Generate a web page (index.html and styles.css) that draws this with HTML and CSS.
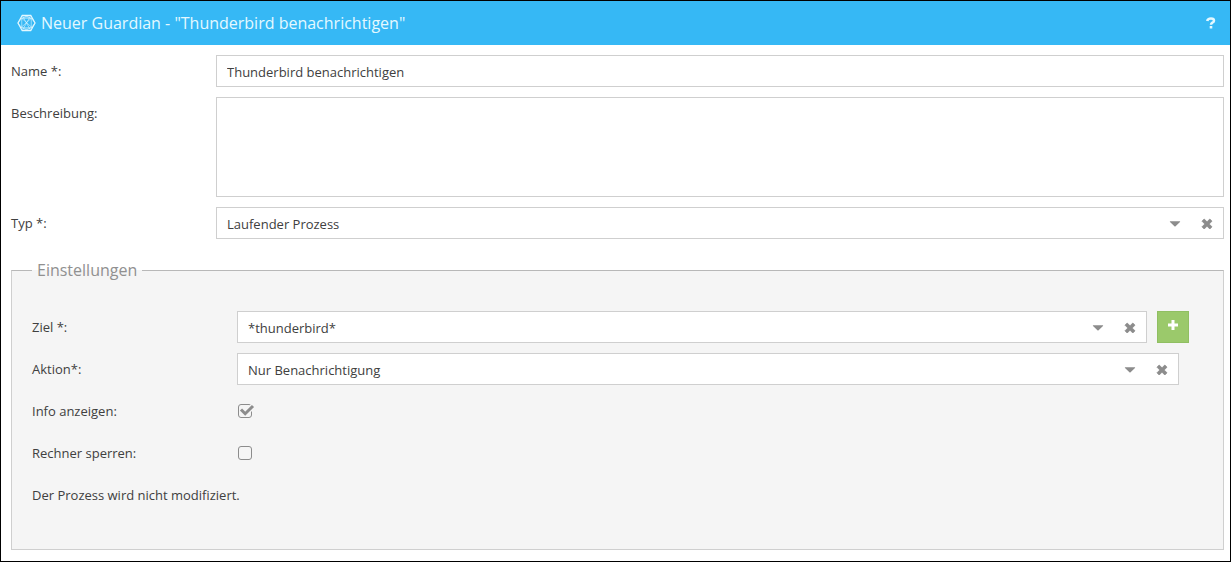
FILE: index.html
```html
<!DOCTYPE html>
<html lang="de">
<head>
<meta charset="utf-8">
<title>Neuer Guardian</title>
<link rel="stylesheet" href="styles.css">
</head>
<body>
<svg class="sprite" aria-hidden="true">
  <symbol id="caret" viewBox="0 0 12 12"><path d="M1.200 3.200h9.600q.7.200.2.900L6.600 8.200q-.6.500-1.200 0L1 4.100q-.5-.7.200-.9z" fill="currentColor"/></symbol>
  <symbol id="cross" viewBox="0 0 12 12"><path d="M3.200 1L6 3.800 8.800 1 11 3.200 8.200 6 11 8.800 8.800 11 6 8.200 3.200 11 1 8.800 3.800 6 1 3.200z" fill="currentColor" stroke="currentColor" stroke-width=".8" stroke-linejoin="round"/></symbol>
</svg>
<main class="window">
  <header class="titlebar">
    <svg class="logo" viewBox="0 0 20 18" aria-hidden="true">
      <path d="M5.500 1h9L19 9l-4.500 8h-9L1 9z" stroke-width="1.200"/>
      <path d="M5.500 1L14.500 17M14.500 1L5.500 17M5 4L16 14M15 4L4 14M5 4h10v10H5zM5.500 1L15 4M14.500 1L5 4M5 14l9.500 3M15 14L5.500 17M1 9l4-5M1 9l4 5M19 9l-4-5M19 9l-4 5" stroke-width=".6"/>
    </svg>
    <h1 class="title">Neuer Guardian - "Thunderbird benachrichtigen"</h1>
    <button class="help" type="button" aria-label="Hilfe">
      <svg viewBox="0 0 10 12" aria-hidden="true"><path d="M1.200 4Q1.700 1.500 5 1.500q3 0 3 2.200 0 1.200-1.600 2Q5 6.500 5 7.800" fill="none" stroke="currentColor" stroke-width="2.500"/><path d="M3.700 9h2.600v2.500H3.700z" fill="currentColor"/></svg>
    </button>
  </header>
  <form class="form">
    <div class="row">
      <label class="label" for="name">Name *:</label>
      <input class="text" id="name" type="text" value="Thunderbird benachrichtigen">
    </div>
    <div class="row">
      <label class="label" for="desc">Beschreibung:</label>
      <textarea class="text area" id="desc"></textarea>
    </div>
    <div class="row">
      <label class="label" for="type">Typ *:</label>
      <div class="combo">
        <select class="select" id="type"><option>Laufender Prozess</option></select>
        <button class="tool" type="button" aria-label="Liste öffnen"><svg><use href="#caret"/></svg></button>
        <button class="tool" type="button" aria-label="Leeren"><svg><use href="#cross"/></svg></button>
      </div>
    </div>
    <fieldset class="group">
      <legend class="legend">Einstellungen</legend>
      <div class="fields">
        <div class="row">
          <label class="label" for="target">Ziel *:</label>
          <div class="combo">
            <select class="select" id="target"><option>*thunderbird*</option></select>
            <button class="tool" type="button" aria-label="Liste öffnen"><svg><use href="#caret"/></svg></button>
            <button class="tool" type="button" aria-label="Leeren"><svg><use href="#cross"/></svg></button>
          </div>
          <button class="add" type="button" aria-label="Hinzufügen"><svg viewBox="0 0 12 12" aria-hidden="true"><path d="M6 1v10M1 6h10" fill="none" stroke="currentColor" stroke-width="3"/></svg></button>
        </div>
        <div class="row inset">
          <label class="label" for="action">Aktion*:</label>
          <div class="combo">
            <select class="select" id="action"><option>Nur Benachrichtigung</option></select>
            <button class="tool" type="button" aria-label="Liste öffnen"><svg><use href="#caret"/></svg></button>
            <button class="tool" type="button" aria-label="Leeren"><svg><use href="#cross"/></svg></button>
          </div>
        </div>
        <div class="row">
          <label class="label" for="info">Info anzeigen:</label>
          <span class="check"><input class="box" id="info" type="checkbox" checked><svg class="tick" viewBox="0 0 18 16" aria-hidden="true"><path d="M8 11l8.500-8.500" fill="none" stroke="#f5f5f5" stroke-width="5.500"/><path d="M4 6.500l4.200 4.200L16 3" fill="none" stroke="currentColor" stroke-width="3"/></svg></span>
        </div>
        <div class="row">
          <label class="label" for="lock">Rechner sperren:</label>
          <span class="check"><input class="box" id="lock" type="checkbox"></span>
        </div>
        <p class="note">Der Prozess wird nicht modifiziert.</p>
      </div>
    </fieldset>
  </form>
</main>
</body>
</html>
```
FILE: styles.css
```css
* { box-sizing: border-box; }
body {
  margin: 0;
  background: #fff;
  color: #404040;
  font: 13px/20px "Open Sans", "Noto Sans", sans-serif;
}
button, input, textarea, select { font: inherit; color: inherit; }
button { padding: 0; border: 0; background: none; cursor: pointer; }
.sprite { display: none; }
.window { min-height: 100vh; border: 1px solid #000; }
.titlebar {
  display: flex;
  align-items: center;
  height: 44px;
  padding: 0 12px 0 16px;
  background: #36b8f5;
  color: #e4f8ff;
}
.logo { width: 19px; height: 18px; fill: none; stroke: currentColor; }
.title { flex: 1; margin: 0 0 0 5px; font-size: 16px; line-height: 22px; font-weight: 400; }
.help { display: grid; place-items: center; width: 14px; height: 14px; }
.help svg { width: 12px; height: 12px; }
.form { display: flex; flex-direction: column; gap: 10px; padding: 10px 6px 11px 10px; }
.row { display: flex; align-items: flex-start; }
.inset { margin-right: 10px; }
.label { flex: 0 0 205px; line-height: 32px; }
.text {
  flex: 1;
  min-width: 0;
  height: 32px;
  margin: 0;
  padding: 2px 10px 0;
  border: 1px solid #cfcfcf;
  border-radius: 0;
  background: #fff;
}
.area { height: 100px; padding: 6px 10px; resize: none; }
.combo { display: flex; flex: 1; min-width: 0; height: 32px; border: 1px solid #cfcfcf; background: #fff; }
.select {
  flex: 1;
  min-width: 0;
  padding: 2px 10px 0;
  border: 0;
  background: none;
  appearance: none;
}
.tool { display: grid; place-items: center; width: 32px; padding-top: 2px; color: #8c8c8c; }
.tool svg { width: 12px; height: 12px; }
.group {
  min-width: 0;
  margin: 10px 0 0;
  padding: 0 34px 38px 20px;
  border: 1px solid #cfcfcf;
  border-top-color: #b8b8b8;
  background: #f5f5f5;
}
.legend { padding: 0 5px; color: #909090; font-size: 16px; line-height: 22px; }
.fields { display: flex; flex-direction: column; gap: 10px; padding-top: 30px; }
.add {
  display: grid;
  place-items: center;
  width: 32px;
  height: 32px;
  margin-left: 10px;
  padding-bottom: 4px;
  border: 1px solid #90bf62;
  background: #9bc96b;
  color: #fff;
}
.add svg { width: 12px; height: 12px; }
.check { position: relative; display: flex; align-items: center; height: 32px; color: #8c8c8c; }
.box {
  width: 14px;
  height: 14px;
  margin: 0 0 0 1px;
  border: 1px solid #8c8c8c;
  border-radius: 3px;
  appearance: none;
}
.tick { position: absolute; left: 0; top: 8px; width: 18px; height: 16px; pointer-events: none; }
.note { margin: 0; line-height: 32px; }
```
